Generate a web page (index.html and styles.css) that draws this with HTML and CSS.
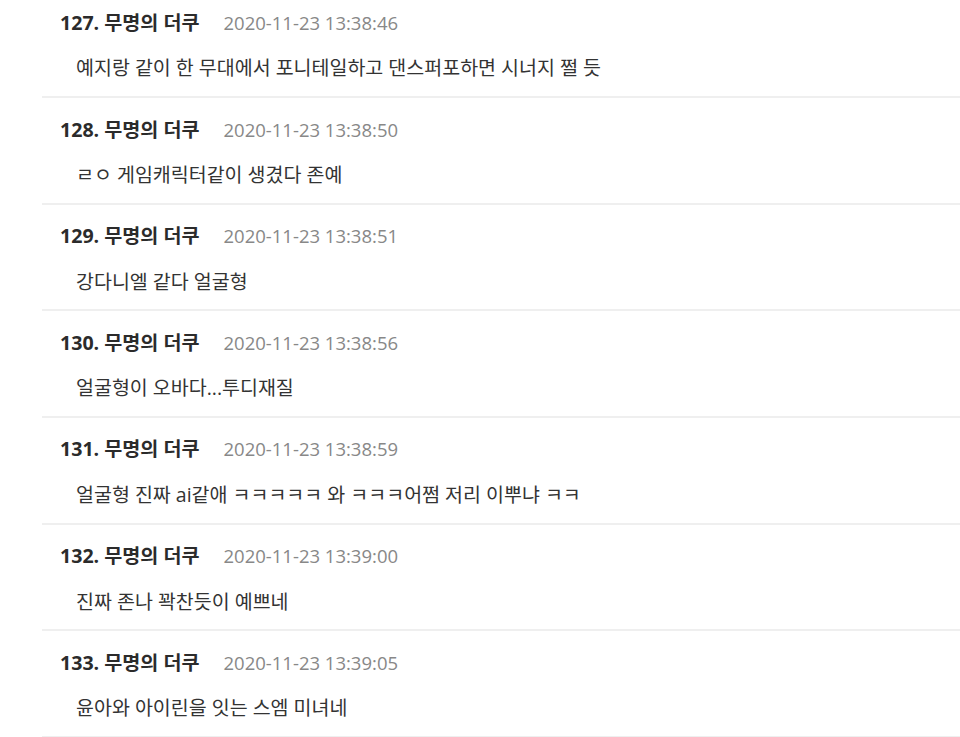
FILE: index.html
```html
<!DOCTYPE html>
<html lang="ko">
<head>
<meta charset="utf-8">
<link rel="stylesheet" href="styles.css">
</head>
<body>
<ul class="comments">
  <li class="comment"><div class="meta"><span class="name">127. 무명의 더쿠</span><span class="date">2020-11-23 13:38:46</span></div><p class="text">예지랑 같이 한 무대에서 포니테일하고 댄스퍼포하면 시너지 쩔 듯</p></li>
  <li class="comment"><div class="meta"><span class="name">128. 무명의 더쿠</span><span class="date">2020-11-23 13:38:50</span></div><p class="text">ㄹㅇ 게임캐릭터같이 생겼다 존예</p></li>
  <li class="comment"><div class="meta"><span class="name">129. 무명의 더쿠</span><span class="date">2020-11-23 13:38:51</span></div><p class="text">강다니엘 같다 얼굴형</p></li>
  <li class="comment"><div class="meta"><span class="name">130. 무명의 더쿠</span><span class="date">2020-11-23 13:38:56</span></div><p class="text">얼굴형이 오바다...투디재질</p></li>
  <li class="comment"><div class="meta"><span class="name">131. 무명의 더쿠</span><span class="date">2020-11-23 13:38:59</span></div><p class="text">얼굴형 진짜 ai같애 ㅋㅋㅋㅋㅋ 와 ㅋㅋㅋ어쩜 저리 이뿌냐 ㅋㅋ</p></li>
  <li class="comment"><div class="meta"><span class="name">132. 무명의 더쿠</span><span class="date">2020-11-23 13:39:00</span></div><p class="text">진짜 존나 꽉찬듯이 예쁘네</p></li>
  <li class="comment"><div class="meta"><span class="name">133. 무명의 더쿠</span><span class="date">2020-11-23 13:39:05</span></div><p class="text">윤아와 아이린을 잇는 스엠 미녀네</p></li>
</ul>
</body>
</html>
```
FILE: styles.css
```css
html, body {
  margin: 0;
  padding: 0;
  background: #fff;
}
body {
  font-family: "Open Sans", "Noto Sans CJK KR", sans-serif;
  color: #333;
  overflow: hidden;
}
.comments {
  list-style: none;
  margin: -8.67px 0 0 42px;
  padding: 0;
}
.comment {
  padding: 19.5px 0 15.67px 0;
  border-bottom: 2px solid #efefef;
}
.meta {
  display: flex;
  align-items: center;
  gap: 24px;
  padding-left: 18px;
  height: 24px;
}
.name {
  font-size: 19.6px;
  font-weight: 700;
  line-height: 24px;
  color: #2b2b2b;
}
.date {
  font-size: 18.5px;
  line-height: 24px;
  color: #888;
}
.text {
  margin: 21.5px 0 0 0;
  padding-left: 34px;
  font-size: 19.5px;
  line-height: 24px;
  color: #333;
}
```
